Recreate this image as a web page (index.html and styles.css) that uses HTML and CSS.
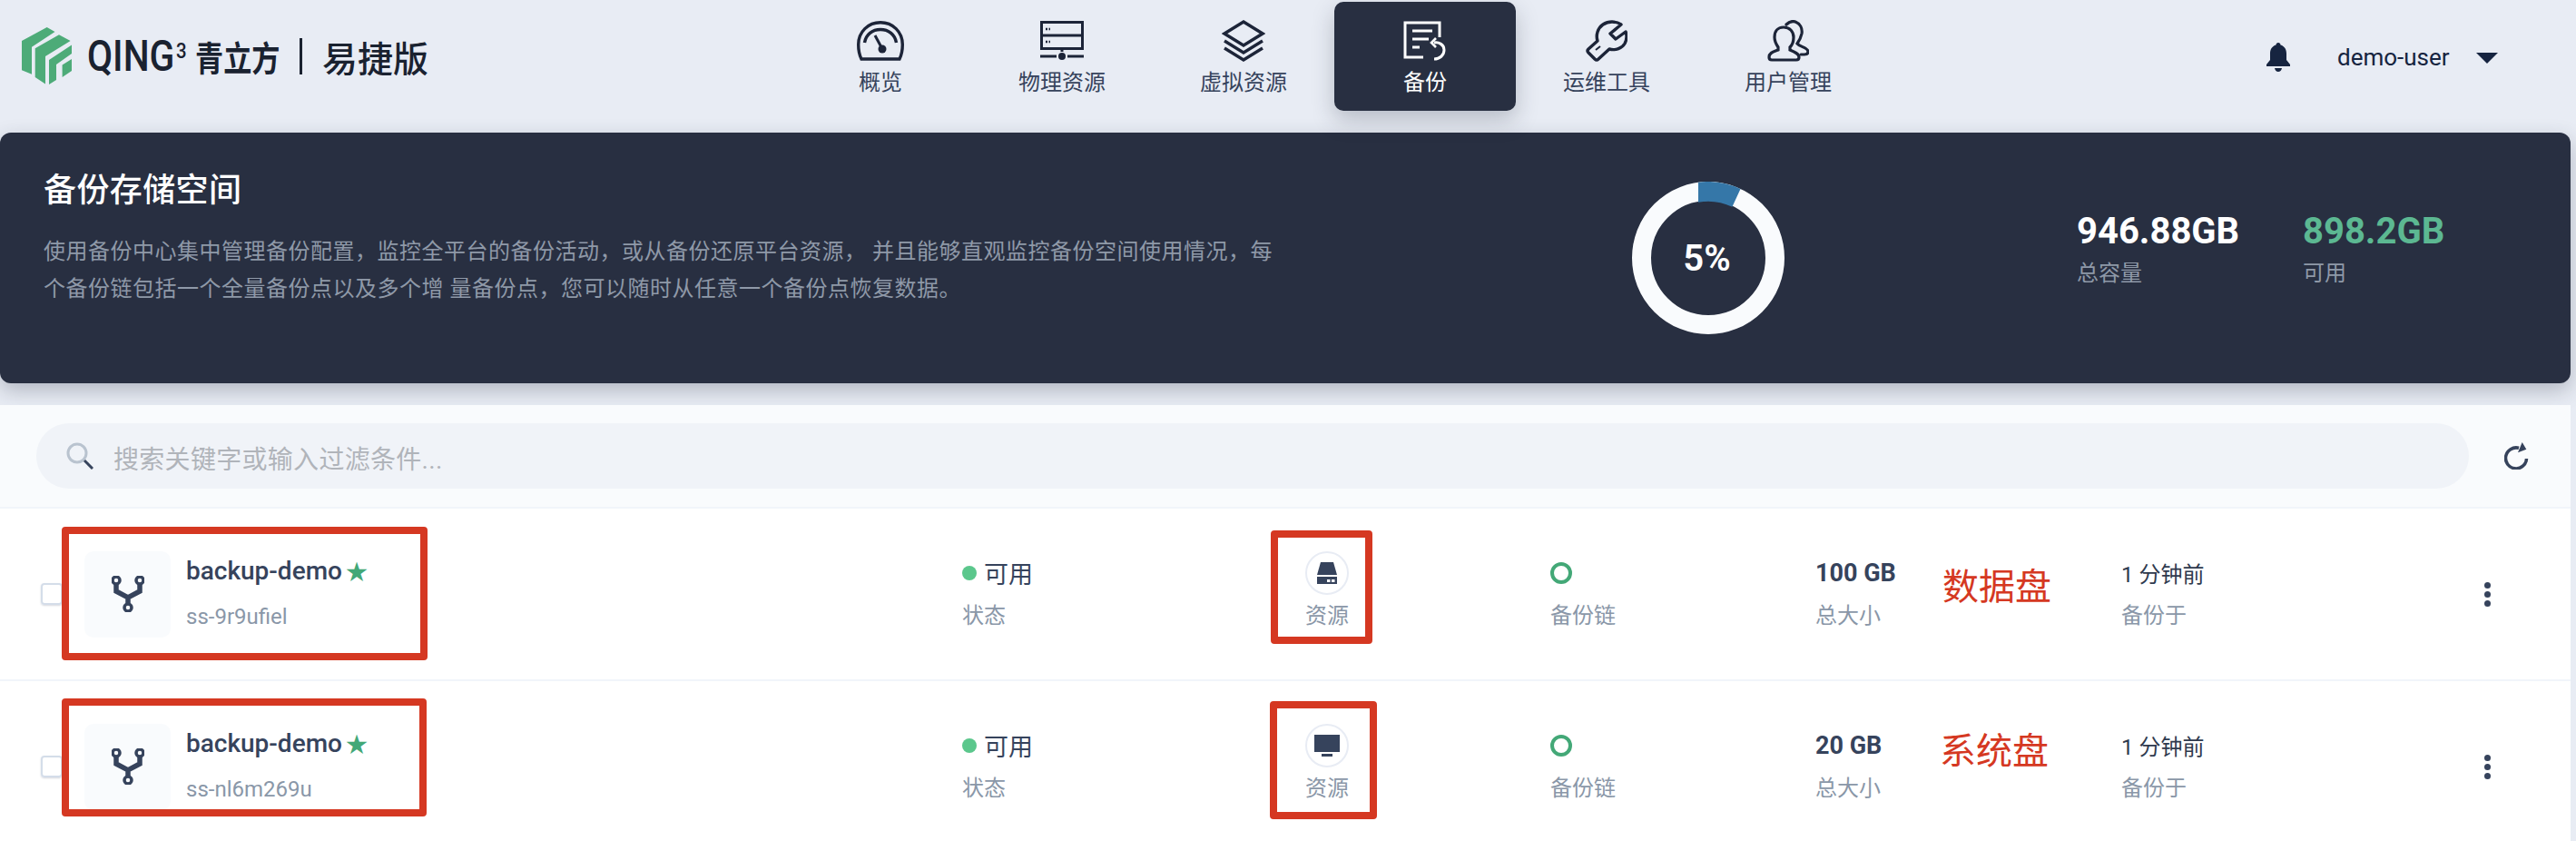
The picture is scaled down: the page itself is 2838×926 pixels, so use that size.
FILE: index.html
```html
<!DOCTYPE html>
<html lang="zh">
  <head>
    <meta charset="utf-8">
    <title>备份</title>
    <link rel="stylesheet" href="styles.css">
  </head>
  <body>
    <header class="topbar">
      <div class="logo">
        <svg class="logo-mark" width="57" height="63" viewBox="0 0 57 63">
          <path d="M27.7 0L36.5 5L11 21.7V51.7L0 47.3V15Z"/>
          <path d="M41 8.3L53.6 15L26 32V62.6L14.7 55V23.3Z"/>
          <path d="M30 36L55 19.5V29L38 41V58L30 63Z"/>
          <path d="M55 35V48L44.6 55V41.6Z"/>
        </svg>
        <span class="logo-q">QING<sup>3</sup></span>
        <span class="logo-cn">青立方</span>
        <span class="logo-sep"></span>
        <span class="logo-ed">易捷版</span>
      </div>
      <nav class="nav">
        <a class="nav-item">
          <svg width="52" height="44" viewBox="0 0 52 44" fill="none" stroke="#1c2438" stroke-width="3.4">
            <path d="M5 42C2.500 37 1.700 32 1.700 26C1.700 12 12.500 1.700 26 1.700S50.300 12 50.300 26C50.300 32 49.500 37 47 42Z"/>
            <path d="M8.500 24C10 15 17 9.500 26 9.500S42 15 43.500 24"/>
            <path d="M20 16L27 29" stroke-width="3"/>
            <circle cx="28" cy="31" r="4.500" fill="#1c2438" stroke="none"/>
          </svg>
          <span>概览</span>
        </a>
        <a class="nav-item">
          <svg width="48" height="44" viewBox="0 0 48 44" fill="none" stroke="#1c2438" stroke-width="3">
            <rect x="1.500" y="1.500" width="45" height="29"/>
            <path d="M1.500 16H46.500M0 39H18M30 39H48M24 30V34"/>
            <circle cx="24" cy="39" r="4" fill="#1c2438" stroke="none"/>
            <path d="M6 9H11M6 23H11" stroke-width="2.500" stroke-dasharray="2 1.500"/>
          </svg>
          <span>物理资源</span>
        </a>
        <a class="nav-item">
          <svg width="48" height="46" viewBox="0 0 48 46" fill="none" stroke="#1c2438" stroke-width="3.400">
            <path d="M24 2L45 15L24 28L3 15Z"/>
            <path d="M3 23L24 36L45 23M3 31L24 44L45 31"/>
          </svg>
          <span>虚拟资源</span>
        </a>
        <a class="nav-item active">
          <svg width="48" height="44" viewBox="0 0 48 44" fill="none" stroke="#fff" stroke-width="3">
            <path d="M40 18V2H2V40H22"/>
            <path d="M10 11H32M10 20H28M10 29H18"/>
            <path d="M34 24C39 23 45 26 45 32C45 38 40 42 34 42"/>
            <path d="M36 19L31 24L36 29" stroke-width="2.600"/>
          </svg>
          <span>备份</span>
        </a>
        <a class="nav-item">
          <svg width="46" height="46" viewBox="0 0 46 46" fill="none" stroke="#1c2438" stroke-width="3.400" stroke-linejoin="round">
            <path d="M39 5C33 1 25 1 19 5C13 9 11 17 13 23L3 32Q1 34 3 36L10 43Q12 45 14 43L26 32C33 34 40 31 43 26C45 22 46 18 44 13L33 21L27 15Z"/>
            <path d="M11 33L16 29" stroke-width="2"/>
          </svg>
          <span>运维工具</span>
        </a>
        <a class="nav-item">
          <svg width="46" height="46" viewBox="0 0 46 46" fill="none" stroke="#1c2438" stroke-width="3.200" stroke-linecap="round">
            <path d="M18 8C11 8 8 13 8 19C8 24 10 27 12 30V33C7 35 2 36 2 41Q2 44 5 44H32Q35 44 35 41C35 37 30 35 25 33V30C28 27 29 24 29 19C29 13 25 8 18 8Z"/>
            <path d="M21 5C24 2 28 1 31 2C36 4 39 9 38 15C37 20 35 23 33 26C36 30 45 30 45 35Q45 38 41 38H37"/>
          </svg>
          <span>用户管理</span>
        </a>
      </nav>
      <div class="user">
        <svg class="bell" width="26" height="32" viewBox="0 0 26 32">
          <path d="M13 0C14.500 0 15.500 1 15.500 2.500C20 3.800 22 7.500 22 12V19L26 24V26H0V24L4 19V12C4 7.500 6 3.800 10.500 2.500C10.500 1 11.500 0 13 0ZM9 28H17C16.500 30.500 15 32 13 32S9.500 30.500 9 28Z" fill="#162440"/>
        </svg>
        <span class="user-name">demo-user</span>
        <span class="caret"></span>
      </div>
    </header>

    <main class="content">
      <section class="banner">
        <div class="banner-text">
          <h1>备份存储空间</h1>
          <p>使用备份中心集中管理备份配置，监控全平台的备份活动，或从备份还原平台资源， 并且能够直观监控备份空间使用情况，每个备份链包括一个全量备份点以及多个增 量备份点，您可以随时从任意一个备份点恢复数据。</p>
        </div>
        <div class="donut">
          <svg width="168" height="168" viewBox="0 0 168 168">
            <circle cx="84" cy="84" r="73.500" fill="none" stroke="#f9fbfd" stroke-width="21"/>
            <path d="M73 .7A84 84 0 0 1 119.500 8L110.400 27.700A62 62 0 0 0 73 22.700Z" fill="#3577a8"/>
          </svg>
          <span class="donut-label">5%</span>
        </div>
        <div class="stat stat-total">
          <strong>946.88GB</strong>
          <span>总容量</span>
        </div>
        <div class="stat stat-free">
          <strong>898.2GB</strong>
          <span>可用</span>
        </div>
      </section>

      <section class="toolbar">
        <div class="search">
          <svg width="30" height="30" viewBox="0 0 30 30" fill="none">
            <circle cx="12" cy="12" r="10" stroke="#b9c3cf" stroke-width="3"/>
            <path d="M20 20L29 29" stroke="#36435c" stroke-width="3"/>
          </svg>
          <span>搜索关键字或输入过滤条件...</span>
        </div>
        <svg class="refresh" width="28" height="30" viewBox="0 0 28 30" fill="none" stroke="#36435c" stroke-width="3.500">
          <path d="M24.500 18A11.500 11.500 0 1 1 16 6.300"/>
          <path d="M19.700 0L24.300 7.700L15 11.300Z" fill="#36435c" stroke="none"/>
        </svg>
      </section>

      <section class="list">
        <div class="row">
          <span class="check"></span>
          <div class="name-cell">
            <div class="tile">
              <svg width="36" height="40" viewBox="0 0 36 40" fill="none" stroke="#36435c" stroke-width="3.500">
                <circle cx="5" cy="5" r="4"/>
                <circle cx="31" cy="5" r="4"/>
                <circle cx="18" cy="35" r="4"/>
                <path d="M5 9V17L18 24L31 17V9M18 24V31" stroke-width="5.500"/>
              </svg>
            </div>
            <div>
              <div class="name">backup-demo<span class="star">★</span></div>
              <div class="label label-id">ss-9r9ufiel</div>
            </div>
          </div>
          <div>
            <div class="value"><i class="dot"></i>可用</div>
            <div class="label">状态</div>
          </div>
          <div class="res-cell">
            <span class="res-icon">
              <svg width="24" height="24" viewBox="0 0 24 24" fill="#36435c">
                <path d="M5 0H19L23 14H1Z"/>
                <path d="M1 16H23V24H1ZM12 19V22H15.500V19ZM17 19V22H20.500V19Z" fill-rule="evenodd"/>
              </svg>
            </span>
            <div class="label">资源</div>
          </div>
          <div>
            <div class="value"><i class="ring"></i></div>
            <div class="label">备份链</div>
          </div>
          <div>
            <div class="value size">100 GB</div>
            <div class="label">总大小</div>
          </div>
          <div>
            <div class="value time">1 分钟前</div>
            <div class="label">备份于</div>
          </div>
          <div class="more"><i></i><i></i><i></i></div>
        </div>
        <div class="row">
          <span class="check"></span>
          <div class="name-cell">
            <div class="tile">
              <svg width="36" height="40" viewBox="0 0 36 40" fill="none" stroke="#36435c" stroke-width="3.500">
                <circle cx="5" cy="5" r="4"/>
                <circle cx="31" cy="5" r="4"/>
                <circle cx="18" cy="35" r="4"/>
                <path d="M5 9V17L18 24L31 17V9M18 24V31" stroke-width="5.500"/>
              </svg>
            </div>
            <div>
              <div class="name">backup-demo<span class="star">★</span></div>
              <div class="label label-id">ss-nl6m269u</div>
            </div>
          </div>
          <div>
            <div class="value"><i class="dot"></i>可用</div>
            <div class="label">状态</div>
          </div>
          <div class="res-cell">
            <span class="res-icon">
              <svg width="28" height="24" viewBox="0 0 28 24" fill="#36435c">
                <path d="M0 0H28V19H0ZM8 21H20V24H8Z"/>
              </svg>
            </span>
            <div class="label">资源</div>
          </div>
          <div>
            <div class="value"><i class="ring"></i></div>
            <div class="label">备份链</div>
          </div>
          <div>
            <div class="value size">20 GB</div>
            <div class="label">总大小</div>
          </div>
          <div>
            <div class="value time">1 分钟前</div>
            <div class="label">备份于</div>
          </div>
          <div class="more"><i></i><i></i><i></i></div>
        </div>
      </section>
    </main>

    <!-- annotations drawn on top of the screenshot -->
    <div class="mark mark-name1"></div>
    <div class="mark mark-res1"></div>
    <div class="mark mark-name2"></div>
    <div class="mark mark-res2"></div>
    <div class="note note-data">数据盘</div>
    <div class="note note-sys">系统盘</div>
  </body>
</html>
```

FILE: styles.css
```css
html, body {
  margin: 0;
  height: 926px;
  overflow: hidden;
}
body {
  position: relative;
  background: #e8ecf4;
  color: #36435c;
  font-family: Roboto, "Noto Sans CJK SC", sans-serif;
}

/* top bar */
.topbar {
  display: flex;
  align-items: flex-start;
  height: 146px;
}
.logo {
  display: flex;
  flex: none;
  align-items: center;
  box-sizing: border-box;
  width: 870px;
  height: 63px;
  margin-top: 30px;
  padding-left: 24px;
  color: #1a2230;
}
.logo-mark {
  fill: #4dab78;
  flex: none;
}
.logo-q {
  width: 119px;
  margin-left: 15px;
  font-size: 48px;
  font-weight: 500;
  white-space: nowrap;
  transform: scaleX(0.85);
  transform-origin: left center;
}
.logo-q sup {
  font-size: 24px;
  line-height: 0;
  vertical-align: 14px;
  margin-left: 2px;
}
.logo-cn {
  width: 93px;
  font-size: 38px;
  font-weight: 700;
  white-space: nowrap;
  transform: scaleX(0.82);
  transform-origin: left center;
}
.logo-sep {
  width: 3px;
  height: 40px;
  margin: 0 22px;
  background: #1a2230;
}
.logo-ed {
  font-size: 39px;
  font-weight: 500;
  white-space: nowrap;
}
.nav {
  display: flex;
  flex: none;
  padding-top: 2px;
}
.nav-item {
  display: flex;
  flex-direction: column;
  align-items: center;
  box-sizing: border-box;
  width: 200px;
  height: 120px;
  padding-top: 20px;
  border-radius: 10px;
  color: #36435c;
  font-size: 24px;
  line-height: 32px;
}
.nav-item svg {
  height: 46px;
  margin-bottom: 7px;
}
.nav-item.active {
  background: #282f41;
  color: #fff;
  box-shadow: 0 10px 24px rgba(40, 47, 65, 0.25);
}
.user {
  display: flex;
  flex: none;
  align-items: center;
  height: 32px;
  margin: 47px 0 0 427px;
  color: #162440;
}
.user-name {
  margin-left: 52px;
  font-size: 26px;
  white-space: nowrap;
}
.caret {
  width: 0;
  height: 0;
  margin: 2px 0 0 29px;
  border-left: 12px solid transparent;
  border-right: 12px solid transparent;
  border-top: 12px solid #162440;
}

/* content */
.content {
  width: 2832px;
}
.banner {
  display: flex;
  align-items: flex-start;
  box-sizing: border-box;
  height: 276px;
  padding-left: 48px;
  border-radius: 12px;
  background: #282f41;
  box-shadow: 0 8px 22px rgba(40, 47, 65, 0.28);
}
.banner-text {
  flex: none;
  width: 1362px;
}
.banner h1 {
  margin: 38px 0 0;
  color: #fff;
  font-size: 36px;
  font-weight: 500;
  line-height: 52px;
  letter-spacing: 0.4px;
}
.banner p {
  margin: 21px 0 0;
  color: #8f99a8;
  font-size: 24px;
  line-height: 41px;
  letter-spacing: 0.5px;
}
.donut {
  display: flex;
  flex: none;
  align-items: center;
  justify-content: center;
  position: relative;
  width: 168px;
  height: 168px;
  margin: 54px 0 0 388px;
}
.donut svg {
  position: absolute;
  top: 0;
  left: 0;
}
.donut-label {
  margin: 0 3px 0 0;
  color: #fff;
  font-size: 40px;
  font-weight: 600;
}
.stat {
  display: flex;
  flex: none;
  flex-direction: column;
  margin-top: 85px;
}
.stat strong {
  color: #fff;
  font-size: 40px;
  font-weight: 700;
  line-height: 48px;
}
.stat span {
  margin-top: 5px;
  color: #8f99a8;
  font-size: 24px;
  line-height: 34px;
}
.stat-total {
  width: 249px;
  margin-left: 322px;
}
.stat-free strong {
  color: #5cb892;
}

/* toolbar */
.toolbar {
  display: flex;
  align-items: center;
  box-sizing: border-box;
  height: 114px;
  margin-top: 24px;
  padding-left: 40px;
  border-bottom: 2px solid #f1f5fa;
  background: #f9fbfd;
}
.search {
  display: flex;
  flex: none;
  align-items: center;
  box-sizing: border-box;
  width: 2680px;
  height: 72px;
  padding-left: 33px;
  border-radius: 36px;
  background: #f0f3f8;
  color: #b0b4ba;
  font-size: 28px;
  letter-spacing: 0.3px;
}
.search span {
  margin-left: 22px;
  padding-top: 4px;
}
.refresh {
  flex: none;
  margin-left: 39px;
}

/* rows */
.list {
  background: #fff;
}
.row {
  display: grid;
  grid-template-columns: 48px 967px 378px 270px 292px 337px 399px 1fr;
  align-items: center;
  box-sizing: border-box;
  height: 190px;
  padding-left: 45px;
  border-bottom: 2px solid #f1f5fa;
}
.check {
  box-sizing: border-box;
  width: 24px;
  height: 24px;
  border: 2px solid #d4dde9;
  border-radius: 4px;
  box-shadow: 0 1px 2px rgba(54, 67, 92, 0.2);
}
.name-cell {
  display: flex;
  align-items: center;
  gap: 17px;
}
.tile {
  display: flex;
  align-items: center;
  justify-content: center;
  width: 95px;
  height: 95px;
  border-radius: 10px;
  background: #f9fbfd;
}
.name {
  font-size: 28px;
  font-weight: 500;
  line-height: 34px;
}
.star {
  margin-left: 4px;
  color: #43a877;
  font-size: 24px;
}
.label {
  margin-top: 13px;
  color: #8a97a8;
  font-size: 24px;
  line-height: 34px;
}
.label-id {
  margin-top: 15px;
}
.value {
  display: flex;
  align-items: center;
  height: 34px;
  font-size: 27px;
}
.size {
  font-size: 27px;
  font-weight: 700;
}
.time {
  font-size: 24px;
  color: #2f3a4e;
}
.dot {
  width: 16px;
  height: 16px;
  margin-right: 8px;
  border-radius: 50%;
  background: #5bc78c;
}
.ring {
  box-sizing: border-box;
  width: 24px;
  height: 24px;
  border: 4px solid #43a877;
  border-radius: 50%;
}
.res-cell {
  padding-bottom: 7px;
}
.res-icon {
  display: flex;
  align-items: center;
  justify-content: center;
  box-sizing: border-box;
  width: 48px;
  height: 48px;
  border: 2px solid #e8ecf4;
  border-radius: 50%;
}
.res-cell .label {
  margin-top: 6px;
}
.more {
  display: flex;
  flex-direction: column;
  gap: 3px;
  margin-left: 1px;
}
.more i {
  width: 7px;
  height: 7px;
  border-radius: 50%;
  background: #36435c;
}

/* red annotations */
.mark {
  position: absolute;
  box-sizing: border-box;
  border: 8px solid #d53822;
  border-radius: 4px;
}
.mark-name1 { left: 68px; top: 580px; width: 403px; height: 147px; }
.mark-res1 { left: 1400px; top: 584px; width: 112px; height: 125px; }
.mark-name2 { left: 68px; top: 769px; width: 402px; height: 130px; }
.mark-res2 { left: 1399px; top: 772px; width: 118px; height: 130px; }
.note {
  position: absolute;
  color: #d53822;
  font-size: 40px;
  line-height: 46px;
  white-space: nowrap;
}
.note-data { left: 2140px; top: 624px; }
.note-sys { left: 2137px; top: 805px; }
```
